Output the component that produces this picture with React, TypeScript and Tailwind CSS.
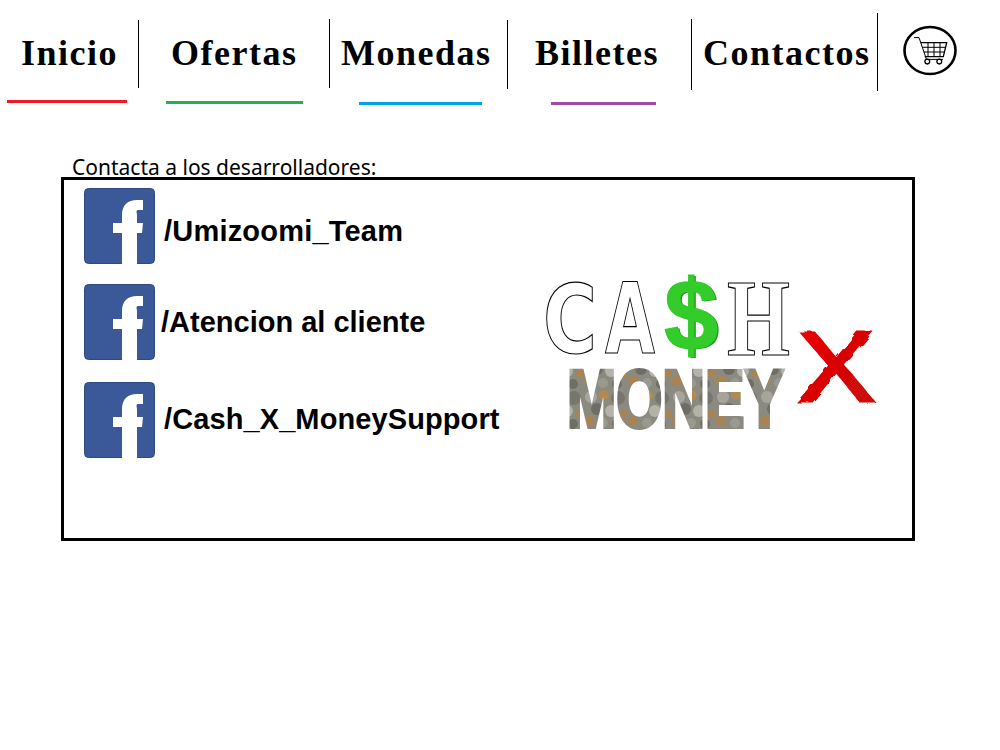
const navItems = [
  { label: "Inicio", cell: "w-[139px]", sep: "mt-[20px] h-[68px] pt-[11px] pl-[21px]", bar: "ml-[7px] mt-[12px] w-[120px] bg-[#ed1c24]" },
  { label: "Ofertas", cell: "w-[191px]", sep: "mt-[19px] h-[69px] pt-[12px] pl-[32px]", bar: "ml-[27px] mt-[13px] w-[137px] bg-[#22b14c]" },
  { label: "Monedas", cell: "w-[178px]", sep: "mt-[20px] h-[69px] pt-[11px] pl-[11px]", bar: "ml-[29px] mt-[13px] w-[123px] bg-[#00a2e8]" },
  { label: "Billetes", cell: "w-[184px]", sep: "mt-[19px] h-[71px] pt-[12px] pl-[27px]", bar: "ml-[43px] mt-[12px] w-[105px] bg-[#a349a4]" },
  { label: "Contactos", cell: "w-[186px]", sep: "mt-[13px] h-[78px] pt-[18px] pl-[11px]", bar: "hidden" },
];

const contacts = [
  { label: "/Umizoomi_Team", row: "mb-[20px]", text: "ml-[8px] mt-[12px] tracking-[0.2px]" },
  { label: "/Atencion al cliente", row: "mb-[22px]", text: "ml-[5px] mt-[2px]" },
  { label: "/Cash_X_MoneySupport", row: "", text: "ml-[8px] mt-0 tracking-[0.1px]" },
];

function FacebookIcon() {
  return (
    <svg width="71" height="76" viewBox="0 0 71 76" className="mr-px shrink-0">
      <rect x="0.5" y="0.5" width="70" height="75" rx="4" fill="#3b5998" stroke="#2f4a80" />
      <path
        d="M38 76V45H29V35H38V27C38 17 44 12 53 12H59V22H55C51 22 53 24 53 28V35H59L58 45H53V76Z"
        fill="#fff"
      />
    </svg>
  );
}

function CartIcon() {
  return (
    <svg width="56" height="52" viewBox="902 25 56 52" className="shrink-0">
      <ellipse cx="930" cy="50.5" rx="25.5" ry="23.5" fill="none" stroke="#000" strokeWidth="2.6" />
      <g fill="none" stroke="#000" strokeWidth="1">
        <path d="M914 37.6H919L926.5 59.4H943" />
        <path d="M920.7 42.7H946.7L943.3 56.7H924.7" strokeWidth="1.3" />
        <path d="M922.4 47.3H945.6M923.8 52H944.4" />
        <path d="M928 42.7V56.7M934 42.7V56.7M940 42.7V56.7" />
        <circle cx="927.3" cy="61.6" r="2.4" strokeWidth="1.3" />
        <circle cx="939.3" cy="61.6" r="2.4" strokeWidth="1.3" />
      </g>
    </svg>
  );
}

function CashLogo() {
  return (
    <svg width="340" height="170" viewBox="0 0 340 170" className="shrink-0">
      <defs>
        <pattern id="coins" width="44" height="40" patternUnits="userSpaceOnUse">
          <rect width="44" height="40" fill="#8b8a81" />
          <circle cx="7" cy="7" r="6" fill="#a7a59b" />
          <circle cx="20" cy="5" r="5" fill="#b08a52" />
          <circle cx="34" cy="8" r="7" fill="#77766e" />
          <circle cx="13" cy="19" r="6" fill="#6f6e66" />
          <circle cx="27" cy="21" r="6" fill="#b4b3aa" />
          <circle cx="40" cy="24" r="4" fill="#a98352" />
          <circle cx="5" cy="31" r="5" fill="#a98352" />
          <circle cx="19" cy="33" r="5" fill="#9a9990" />
          <circle cx="33" cy="34" r="5" fill="#6f6e66" />
        </pattern>
        <linearGradient id="xred" x1="0" y1="0" x2="1" y2="1">
          <stop offset="0" stopColor="#ee0000" />
          <stop offset="1" stopColor="#c40a0a" />
        </linearGradient>
        <filter id="brush" x="-10%" y="-10%" width="120%" height="120%">
          <feTurbulence type="fractalNoise" baseFrequency="0.09" numOctaves="2" seed="4" />
          <feDisplacementMap in="SourceGraphic" scale="6" />
        </filter>
      </defs>
      <g fill="#fff" stroke="#000" strokeWidth="1.2">
        <text x="3" y="83" fontFamily="'DejaVu Sans', sans-serif" fontWeight="700" fontSize="94" textLength="54" lengthAdjust="spacingAndGlyphs">C</text>
        <text x="65" y="83" fontFamily="'DejaVu Sans', sans-serif" fontWeight="700" fontSize="98" textLength="50" lengthAdjust="spacingAndGlyphs">A</text>
        <text x="187" y="85" fontFamily="'Liberation Serif', serif" fontWeight="700" fontSize="110" textLength="63" lengthAdjust="spacingAndGlyphs">H</text>
      </g>
      <text x="126" y="81" fill="#259a20" fontFamily="'Liberation Sans', sans-serif" fontWeight="700" fontSize="100" textLength="54" lengthAdjust="spacingAndGlyphs">$</text>
      <text x="124" y="80" fill="#33cc2a" stroke="#33cc2a" strokeWidth="1.2" fontFamily="'Liberation Sans', sans-serif" fontWeight="700" fontSize="100" textLength="54" lengthAdjust="spacingAndGlyphs">$</text>
      <text x="27" y="157" fill="url(#coins)" stroke="url(#coins)" strokeWidth="4" fontFamily="'Liberation Sans', sans-serif" fontWeight="700" fontSize="82" textLength="217" lengthAdjust="spacingAndGlyphs">MONEY</text>
      <text x="257" y="131" fill="url(#xred)" stroke="url(#xred)" strokeWidth="3" filter="url(#brush)" fontFamily="'Liberation Sans', sans-serif" fontWeight="400" fontSize="98" textLength="78" lengthAdjust="spacingAndGlyphs">X</text>
    </svg>
  );
}

export default function App() {
  return (
    <div className="h-[750px] w-[1000px] bg-white text-black">
      {/* Nav */}
      <nav className="flex h-[105px] items-start">
        {navItems.map((item) => (
          <div className={item.cell} key={item.label}>
            <div className={`border-r border-black font-['Liberation_Serif',serif] text-[36px] font-bold leading-[44px] tracking-[1.5px] whitespace-nowrap ${item.sep}`}>
              {item.label}
            </div>
            <div className={`h-[3px] ${item.bar}`} />
          </div>
        ))}
        <div className="ml-[24px] mt-[25px]">
          <CartIcon />
        </div>
      </nav>

      {/* Contact box */}
      <main className="ml-[61px] mt-[48px] w-[854px]">
        <p className="h-[24px] pl-[11px] font-['Noto_Sans',sans-serif] text-[21px] leading-[28px] whitespace-nowrap">
          Contacta a los desarrolladores:
        </p>
        <section className="flex h-[364px] border-[3px] border-black">
          <div className="w-[476px] pl-[20px] pt-[8px]">
            {contacts.map((c) => (
              <div className={`flex items-center ${c.row}`} key={c.label}>
                <FacebookIcon />
                <span className={`font-['Liberation_Sans',sans-serif] text-[29px] font-bold whitespace-nowrap ${c.text}`}>
                  {c.label}
                </span>
              </div>
            ))}
          </div>
          <div className="mt-[90px]">
            <CashLogo />
          </div>
        </section>
      </main>
    </div>
  );
}
